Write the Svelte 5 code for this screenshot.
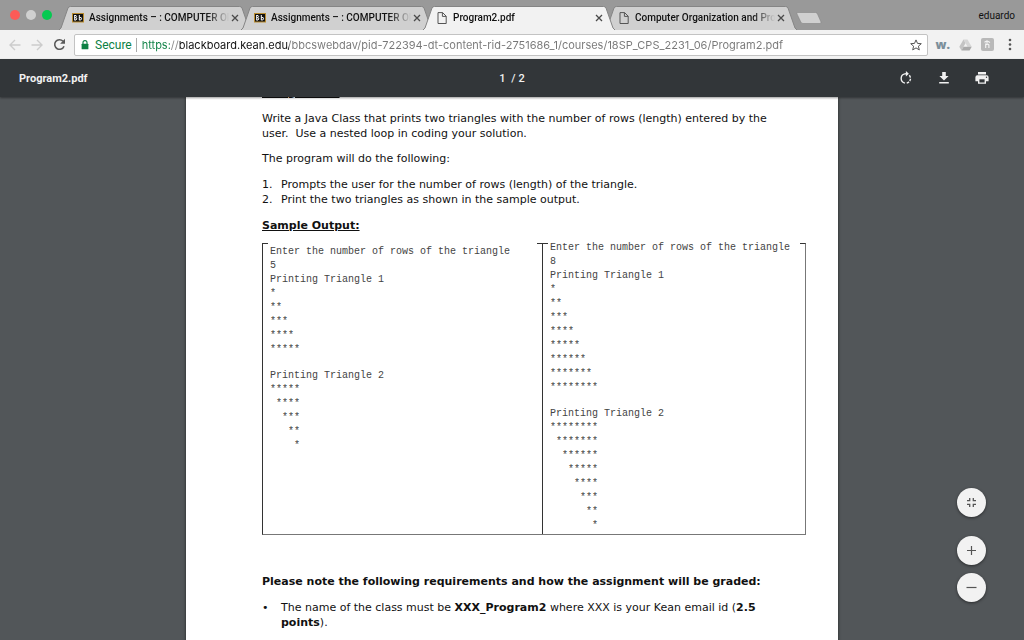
<script>
    let tabs = [
        { id: 1, title: 'Assignments – : COMPUTER ORG', icon: 'bb' },
        { id: 2, title: 'Assignments – : COMPUTER ORG', icon: 'bb' },
        { id: 3, title: 'Program2.pdf', icon: 'file' },
        { id: 4, title: 'Computer Organization and Prog', icon: 'file' }
    ];
    let activeTab = 3;
    let page = 1;
    let url = 'https://blackboard.kean.edu/bbcswebdav/pid-722394-dt-content-rid-2751686_1/courses/18SP_CPS_2231_06/Program2.pdf';

    function growing(rows) {
        return Array.from({ length: rows }, (_, i) => '*'.repeat(i + 1)).join('\n');
    }
    function shrinking(rows) {
        return Array.from({ length: rows }, (_, i) => ' '.repeat(i) + '*'.repeat(rows - i)).join('\n');
    }

    let samples = [5, 8];
</script>

<div class="browser">
    <header class="strip">
        <div class="lights">
            <button class="light red" aria-label="Close window"></button>
            <button class="light grey" aria-label="Minimize window"></button>
            <button class="light green" aria-label="Zoom window"></button>
        </div>
        <div class="tabs">
            {#each tabs as tab (tab.id)}
                <div class="tab" class:active={tab.id === activeTab}>
                    <svg class="shape" viewBox="0 0 192 24" preserveAspectRatio="none">
                        <path d="M0 24 L2 22 L9 2 Q9.600 .5 11.500 .5 H180.500 Q182.400 .5 183 2 L190 22 L192 24" />
                    </svg>
                    {#if tab.icon === 'bb'}
                        <svg class="icon" width="12" height="12" viewBox="0 0 12 12">
                            <rect x=".5" y="1.500" width="11" height="8.500" fill="#111" stroke="#b98b2e" />
                            <path d="M2.700 3v5.300M2.700 3.500h1.300q1.200 1 0 2.200h-1.300M4 5.700q1.700 1.100 0 2.300h-1.300M7.300 3v5.200M7.300 5.600q2.600-.7 2.200 1.200t-2.200 1.100" fill="none" stroke="#fff" />
                        </svg>
                    {:else}
                        <svg class="icon" width="12" height="12" viewBox="0 0 12 12">
                            <path d="M2 .6h4.600l3.600 3.600v7.300H2zM6.400 .6v3.800h3.800" fill="none" stroke="#555" />
                        </svg>
                    {/if}
                    <button class="title" on:click={() => activeTab = tab.id}>{tab.title}</button>
                    <button class="close" aria-label="Close tab">
                        <svg width="8" height="8" viewBox="0 0 8 8"><path d="M1 1l6 6M7 1l-6 6" stroke="#4a4a4a" stroke-width="1.300" /></svg>
                    </button>
                </div>
            {/each}
            <button class="new-tab" aria-label="New tab">
                <svg width="26" height="12" viewBox="0 0 26 12">
                    <path d="M1.500 .5h18q1.500 0 2 1.500l3.500 8q.4 1.500-1 1.500h-17q-1.600 0-2.200-1.500l-3.800-8q-.5-1.500.5-1.500z" fill="#d0d0d0" stroke="#858585" stroke-width=".6" />
                </svg>
            </button>
        </div>
        <span class="user">eduardo</span>
    </header>

    <nav class="toolbar">
        <div class="history">
            <button aria-label="Back"><svg width="12" height="12" viewBox="0 0 12 12"><path d="M11.500 6h-10M6 1L1 6l5 5" fill="none" stroke="#ccc" stroke-width="1.400" /></svg></button>
            <button aria-label="Forward"><svg width="12" height="12" viewBox="0 0 12 12"><path d="M.5 6h10M6 1l5 5-5 5" fill="none" stroke="#ccc" stroke-width="1.400" /></svg></button>
            <button aria-label="Reload">
                <svg width="13" height="13" viewBox="0 0 13 13">
                    <path d="M11 8.200a4.800 4.800 0 1 1-1-5" fill="none" stroke="#5a5a5a" stroke-width="1.600" />
                    <path d="M12 .8v4.900h-4.900z" fill="#5a5a5a" />
                </svg>
            </button>
        </div>
        <div class="address">
            <svg width="8" height="10" viewBox="0 0 8 10">
                <path d="M2 4V2.600a2 2 0 0 1 4 0V4" fill="none" stroke="#0b8043" stroke-width="1.100" />
                <rect x=".6" y="3.800" width="6.800" height="5.400" rx=".5" fill="#0b8043" />
            </svg>
            <label for="url">Secure</label>
            <input id="url" type="text" bind:value={url} spellcheck="false" />
            <button aria-label="Bookmark this page">
                <svg width="12" height="12" viewBox="0 0 12 12"><path d="M6 .9l1.500 3.500 3.800.3-2.900 2.500.9 3.700L6 8.900l-3.300 2 .9-3.700L.7 4.700l3.800-.3z" fill="none" stroke="#555" /></svg>
            </button>
        </div>
        <div class="extensions">
            <button class="word" aria-label="W extension">w.</button>
            <button aria-label="Drive extension">
                <svg width="13" height="12" viewBox="0 0 13 12">
                    <path d="M4.500 .6L.3 7.800l2.200 3.600L6.600 4z" fill="#c4c4c4" />
                    <path d="M4.500 .6h4l4.200 7.200H8.500z" fill="#d6d6d6" />
                    <path d="M4.600 7.800h8.100l-2.100 3.600H2.500z" fill="#aaa" />
                </svg>
            </button>
            <button aria-label="Honey extension">
                <svg width="13" height="13" viewBox="0 0 13 13">
                    <rect width="13" height="13" rx="2" fill="#b9b9b9" />
                    <path d="M4.700 10V5.400M4.700 6.800q1.800-1.300 3.200 0V10M3.500 4.300l2.500-1.500 3 1.700M6 2.800v2.400" fill="none" stroke="#f5f5f5" stroke-width="1.100" />
                </svg>
            </button>
            <button aria-label="Menu">
                <svg width="4" height="13" viewBox="0 0 4 13" fill="#555"><circle cx="2" cy="2" r="1.300" /><circle cx="2" cy="6.500" r="1.300" /><circle cx="2" cy="11" r="1.300" /></svg>
            </button>
        </div>
    </nav>

    <div class="pdf-bar">
        <strong>Program2.pdf</strong>
        <div class="pager"><input type="text" aria-label="Page number" bind:value={page} /><span>/ 2</span></div>
        <div class="actions">
            <button aria-label="Rotate clockwise">
                <svg width="14" height="14" viewBox="0 0 14 14">
                    <path d="M6 12.100A4.700 4.700 0 0 1 5.800 2.900L7.500 2.800" fill="none" stroke="#f1f1f1" stroke-width="1.400" />
                    <path d="M6.900 0v5.600l3-2.800z" fill="#f1f1f1" />
                    <path d="M10.300 4.300A4.700 4.700 0 0 1 7.300 12.100" fill="none" stroke="#f1f1f1" stroke-width="1.400" stroke-dasharray="2.500 1.100" />
                </svg>
            </button>
            <button aria-label="Download">
                <svg width="14" height="14" viewBox="0 0 14 14" fill="#f1f1f1"><path d="M5.200 1h3.600v4h2.800L7 9.600 2.400 5h2.800zM2.200 11h9.600v1.400H2.200z" /></svg>
            </button>
            <button aria-label="Print">
                <svg width="14" height="14" viewBox="0 0 14 14" fill="#f1f1f1">
                    <path d="M3 1h8v2.500H3zM2.400 4.300h9.200q2 0 2 2v4h-2.600v2.400H3v-2.400H.4v-4q0-2 2-2z" />
                    <path d="M4.400 8.300h5.200v3.200H4.400z" fill="#323639" />
                    <circle cx="11.500" cy="6.300" r=".7" fill="#323639" />
                </svg>
            </button>
        </div>
    </div>

    <main>
        <article>
            <h2 class="first">Assignment:</h2>
            <p>Write a Java Class that prints two triangles with the number of rows (length) entered by the user.&nbsp; Use a nested loop in coding your solution.</p>
            <p>The program will do the following:</p>
            <ol>
                <li>Prompts the user for the number of rows (length) of the triangle.</li>
                <li>Print the two triangles as shown in the sample output.</li>
            </ol>
            <h2>Sample Output:</h2>
            <div class="samples">
                {#each samples as rows (rows)}
                    <div class="sample">
                        <div class="console">
                            <pre>{'Enter the number of rows of the triangle\n' + rows + '\nPrinting Triangle 1\n' + growing(rows)}</pre>
                            <pre>{'Printing Triangle 2\n' + shrinking(rows)}</pre>
                        </div>
                    </div>
                {/each}
            </div>
            <h3>Please note the following requirements and how the assignment will be graded:</h3>
            <ul>
                <li>The name of the class must be <b>XXX_Program2</b> where XXX is your Kean email id (<b>2.5 points</b>).</li>
            </ul>
        </article>

        <div class="zoom">
            <button class="fit" aria-label="Fit to page">
                <svg width="11" height="11" viewBox="0 0 11 11"><path d="M1 3.700h2.700V1M7.300 1v2.700H10M1 7.300h2.700V10M7.300 10V7.300H10" fill="none" stroke="#555" stroke-width="1.300" /></svg>
            </button>
            <button aria-label="Zoom in">
                <svg width="11" height="11" viewBox="0 0 11 11"><path d="M5.500 1v9M1 5.500h9" stroke="#555" stroke-width="1.200" /></svg>
            </button>
            <button aria-label="Zoom out">
                <svg width="11" height="11" viewBox="0 0 11 11"><path d="M.5 5.500h10" stroke="#555" stroke-width="1.200" /></svg>
            </button>
        </div>
    </main>
</div>

<style>
    :global(body) {
        margin: 0;
    }
    button {
        display: flex;
        align-items: center;
        justify-content: center;
        padding: 0;
        border: 0;
        background: none;
        color: inherit;
        font: inherit;
        flex: none;
    }
    input {
        padding: 0;
        border: 0;
        outline: 0;
        background: none;
        font: inherit;
    }
    svg {
        display: block;
        flex: none;
    }
    .browser {
        display: flex;
        flex-direction: column;
        height: 100vh;
        overflow: hidden;
        font-family: Roboto, sans-serif;
        font-size: 10px;
        color: #111;
    }

    .strip {
        display: flex;
        align-items: flex-end;
        height: 30px;
        background: #999;
        font-weight: 500;
        flex: none;
    }
    .lights {
        display: flex;
        gap: 6px;
        align-self: center;
        padding: 0 7px 0 10px;
    }
    .light {
        width: 10px;
        height: 10px;
        border-radius: 50%;
    }
    .red {
        background: #fc5b57;
    }
    .grey {
        background: #d0d0d0;
    }
    .green {
        background: #05c951;
    }
    .tabs {
        display: flex;
        align-items: center;
        flex: 1;
        min-width: 0;
    }
    .tab {
        position: relative;
        display: flex;
        align-items: center;
        box-sizing: border-box;
        flex: 0 1 192px;
        min-width: 0;
        height: 24px;
        padding: 0 10px 0 13px;
        margin-right: -10px;
    }
    .tab.active {
        z-index: 1;
    }
    .shape {
        position: absolute;
        inset: 0;
        width: 100%;
        height: 100%;
    }
    .shape path {
        fill: #d0d0d0;
        stroke: #858585;
    }
    .active .shape path {
        fill: #f2f2f2;
    }
    .icon {
        position: relative;
        margin-right: 5px;
    }
    .title {
        position: relative;
        display: block;
        flex: 1;
        min-width: 0;
        overflow: hidden;
        white-space: nowrap;
        text-align: left;
        line-height: 16px;
        mask-image: linear-gradient(to right, #000 84%, transparent);
    }
    .close {
        position: relative;
        width: 12px;
    }
    .new-tab {
        margin-left: 9px;
    }
    .user {
        align-self: center;
        padding-right: 9px;
        font-weight: 400;
    }

    .toolbar {
        display: flex;
        align-items: center;
        gap: 8px;
        height: 29px;
        padding: 0 12px 0 9px;
        background: #f2f2f2;
        font-size: 12px;
        flex: none;
    }
    .history {
        display: flex;
        align-items: center;
        gap: 10px;
    }
    .address {
        display: flex;
        align-items: center;
        flex: 1;
        height: 20px;
        padding: 0 5px 0 6px;
        border: 1px solid #c3c3c3;
        border-radius: 2px;
        background: #fff;
        min-width: 0;
    }
    .address label {
        margin: 0 5px 0 6px;
        padding-right: 4px;
        border-right: 1px solid #aaa;
        line-height: 14px;
        color: #0b8043;
    }
    /* scheme in green, host in black, the rest of the url in grey */
    .address input {
        flex: 1;
        min-width: 0;
        font-family: Inter, sans-serif;
        font-size: 11px;
        line-height: 16px;
        color: transparent;
        background: linear-gradient(to right, #0b8043 28px, #888 28px 37px, #111 37px 147px, #777 147px);
        background-clip: text;
    }
    .extensions {
        display: flex;
        align-items: center;
        gap: 9px;
    }
    .word {
        color: #7b8f9b;
        font-family: "Open Sans", sans-serif;
        font-weight: 800;
        line-height: 12px;
    }
    .extensions button:last-child {
        margin-left: 5px;
    }

    .pdf-bar {
        display: grid;
        grid-template-columns: 1fr auto 1fr;
        align-items: center;
        position: relative;
        z-index: 2;
        height: 38px;
        padding: 0 19px;
        background: #323639;
        box-shadow: 0 1px 2px rgba(0, 0, 0, 0.4);
        color: #f1f1f1;
        font-size: 11px;
        flex: none;
    }
    .pdf-bar strong {
        font-weight: 700;
    }
    .pager {
        display: flex;
        align-items: center;
        gap: 4px;
        font-weight: 500;
    }
    .pager input {
        width: 8px;
        color: inherit;
    }
    .actions {
        display: flex;
        justify-content: flex-end;
        gap: 24px;
        padding-right: 16px;
    }

    main {
        flex: 1;
        min-height: 0;
        overflow: hidden;
        background: #525659;
    }
    article {
        box-sizing: border-box;
        width: 652px;
        max-width: 100%;
        min-height: 100%;
        margin: 0 auto;
        padding: 0 32px 40px 76px;
        overflow: hidden;
        background: #fff;
        box-shadow: 0 0 3px rgba(0, 0, 0, 0.6);
        font-family: Verdana, "DejaVu Sans", sans-serif;
        font-size: 11px;
        line-height: 15px;
    }
    h2, h3 {
        margin: 0;
        font-size: 11px;
    }
    h2 {
        text-decoration: underline;
    }
    /* scrolled up under the viewer bar */
    .first {
        margin-top: -12px;
    }
    p, ol, ul {
        margin: 11px 36px 11px 0;
    }
    p {
        margin-bottom: 10px;
    }
    p + p {
        margin-top: 10px;
    }
    ol, ul {
        padding-left: 19px;
        list-style: none;
        counter-reset: item;
    }
    li::before {
        content: '•';
        float: left;
        margin-left: -19px;
    }
    ol li::before {
        counter-increment: item;
        content: counter(item) '.';
    }
    .samples {
        display: grid;
        grid-template-columns: 280fr 264fr;
        margin-top: 10px;
        border: 1px solid #333;
        border-right-color: #777;
        border-bottom-color: #777;
    }
    .sample + .sample {
        border-left: 1px solid #333;
    }
    /* the pasted console hides the frame's top edge, leaving the corners */
    .console {
        margin: -3px 5px 0;
        padding: 0 0 1px 2px;
        background: #fff;
    }
    .sample:first-child .console {
        padding-top: 4px;
    }
    pre {
        margin: 0 0 12px;
        font-family: "Liberation Mono", monospace;
        font-size: 10px;
        line-height: 14px;
        color: #444;
    }
    pre:last-child {
        margin: 0;
    }
    h3 {
        margin-top: 39px;
    }

    .zoom {
        position: fixed;
        right: 38px;
        bottom: 38px;
        display: flex;
        flex-direction: column;
        gap: 8px;
    }
    .zoom button {
        width: 29px;
        height: 29px;
        border-radius: 50%;
        background: #f2f2f2;
        box-shadow: 0 1px 3px rgba(0, 0, 0, 0.5);
    }
    .zoom .fit {
        margin-bottom: 11px;
    }
</style>
